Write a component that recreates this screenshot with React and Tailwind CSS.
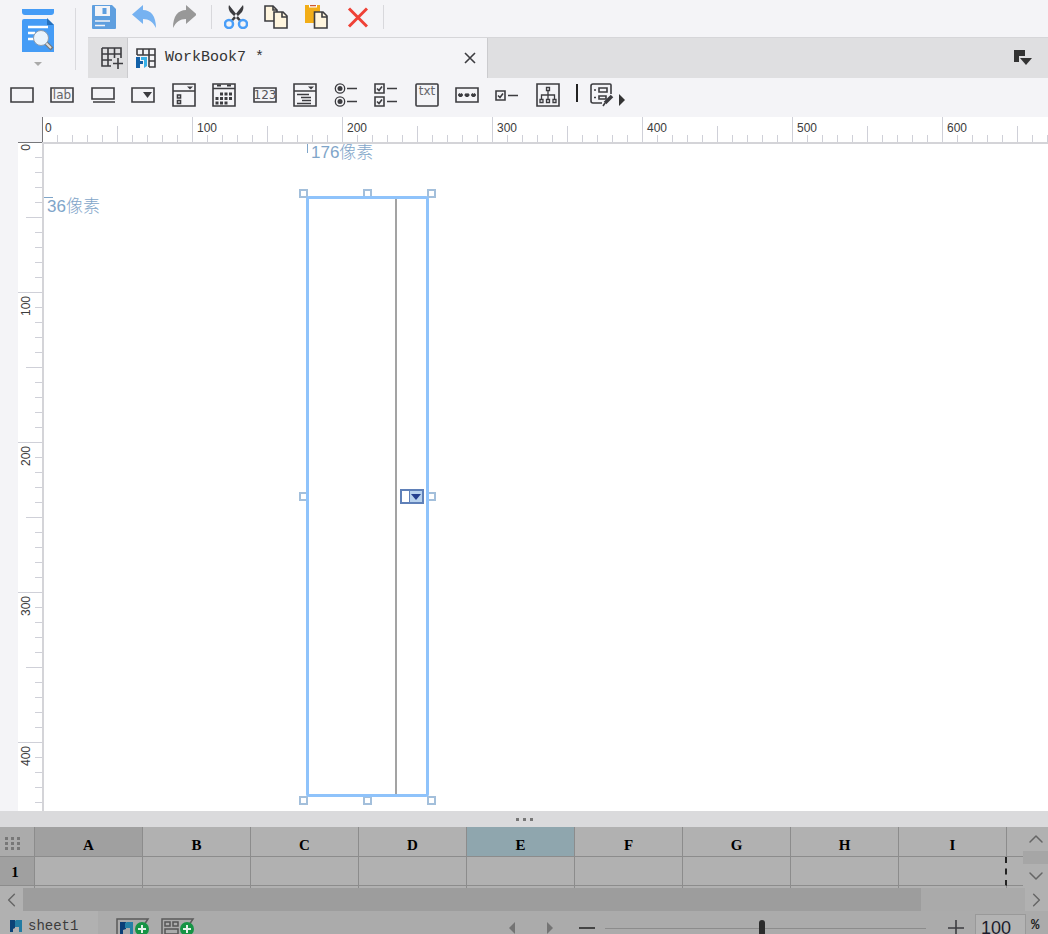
import { ChevronDown, ChevronLeft, ChevronRight, ChevronUp } from "lucide-react";

const INK = "#3c3c40";

function Icon({ children, className = "w-6 h-6", box = "0 0 24 24" }) {
  return (
    <svg viewBox={box} className={`${className} shrink-0`} fill="none" stroke={INK} strokeWidth="1.6" aria-hidden="true">
      {children}
    </svg>
  );
}

function SheetMark({ className }) {
  return (
    <svg viewBox="0 0 12 12" className={`${className} shrink-0`} aria-hidden="true">
      <path d="M0 0h5v8l-2 1v3H0z" fill="#0b4277" />
      <path d="M5 1l1-1h6v12H9V7H5z" fill="#227ba3" />
    </svg>
  );
}

const fileTools = [
  {
    name: "Save",
    icon: (
      <Icon>
        <path d="M1 0h19l4 4v19a1 1 0 0 1-1 1H1a1 1 0 0 1-1-1V1a1 1 0 0 1 1-1z" fill="#5f9fdf" stroke="none" />
        <path d="M3 1h15v10H3z" fill="#f4f4f7" stroke="none" />
        <path d="M10.500 3h4v6h-4z" fill="#5f9fdf" stroke="none" />
        <path d="M3 16h15M3 20.500h10" stroke="#f4f4f7" />
      </Icon>
    ),
  },
  {
    name: "Undo",
    icon: (
      <Icon>
        <path d="M11 0v5c8 0 13 6 13 18-3-6-7-9-13-9v5L0 9.500z" fill="#76b2f1" stroke="none" />
      </Icon>
    ),
  },
  {
    name: "Redo",
    icon: (
      <Icon>
        <path d="M14 0v5C6 5 1 11 1 23c3-6 7-9 13-9v5l11-9.500z" fill="#989898" stroke="none" />
      </Icon>
    ),
  },
];

const editTools = [
  {
    name: "Cut",
    icon: (
      <Icon>
        <path d="M5 0c-1 3 0 5 1 7l9 9 2-1zM19 0c1 3 0 5-1 7l-9 9-2-1z" fill={INK} stroke="none" />
        <circle cx="5" cy="19" r="4" stroke="#4a9ef8" strokeWidth="2.500" fill="#f4f4f7" />
        <circle cx="19" cy="19" r="4" stroke="#4a9ef8" strokeWidth="2.500" fill="#f4f4f7" />
      </Icon>
    ),
  },
  {
    name: "Copy",
    icon: (
      <Icon>
        <path d="M1 1h8l4 4v11H1z" fill="#fff5de" />
        <path d="M9 1v4h4" />
        <path d="M10 7h9l4 4v12H10z" fill="#fff5de" />
        <path d="M18 7v5h5" />
      </Icon>
    ),
  },
  {
    name: "Paste",
    icon: (
      <Icon>
        <path d="M1 0h15v18H1z" fill="#f2ad17" stroke="none" />
        <path d="M5 0h8v2.500H5z" fill="#fff" stroke="none" />
        <path d="M6 .500h6" stroke="#d0582d" />
        <path d="M10.500 7h8.500l4 4v12H10.500z" fill="#fff5de" />
        <path d="M18 7v5h5" />
      </Icon>
    ),
  },
  {
    name: "Delete",
    icon: (
      <Icon>
        <path d="M5 3.500l18 18M23 3.500l-18 18" stroke="#ef4136" strokeWidth="3" />
      </Icon>
    ),
  },
];

const widgets = [
  { name: "Text", icon: <Icon><path d="M1 5h22v14H1z" /></Icon> },
  {
    name: "Label",
    icon: (
      <Icon>
        <path d="M1 5h22v14H1z" />
        <text x="12" y="16" textAnchor="middle" fontSize="12" fontFamily="DejaVu Sans" fill="#66666a" stroke="none">lab</text>
      </Icon>
    ),
  },
  { name: "Button", icon: <Icon><path d="M1 5h22v11H1zM2 19h22" /></Icon> },
  {
    name: "Combo box",
    icon: (
      <Icon>
        <path d="M1 5h22v14H1z" />
        <path d="M12 9h9l-4.500 6z" fill={INK} stroke="none" />
      </Icon>
    ),
  },
  {
    name: "Combo check",
    icon: (
      <Icon>
        <path d="M1 1h22v22H1zM1 8h22M5.500 12h3v3h-3zM5.500 17.500h3v3h-3z" />
        <path d="M15 3.500h6l-3 3z" fill={INK} stroke="none" />
      </Icon>
    ),
  },
  {
    name: "Date",
    icon: (
      <Icon>
        <path d="M1 1h22v22H1zM1 5.500h22" />
        <path d="M5 2.500h4M15 2.500h4" strokeWidth="2" />
        <path d="M8 11h12M3.500 15.500h16.500M3.500 20h12" strokeWidth="3" strokeDasharray="3 1.500" />
      </Icon>
    ),
  },
  {
    name: "Number",
    icon: (
      <Icon>
        <path d="M1 5h22v14H1z" />
        <text x="12" y="16" textAnchor="middle" fontSize="12" fontFamily="DejaVu Sans" fill="#55555a" stroke="none">123</text>
      </Icon>
    ),
  },
  {
    name: "Tree combo",
    icon: (
      <Icon>
        <path d="M1 1h22v22H1zM1 8h22M4 11.500h12M8 14.500h10M9 17.500h9M4 20.500h14" />
        <path d="M15 3.500h6l-3 3z" fill={INK} stroke="none" />
      </Icon>
    ),
  },
  {
    name: "Radio group",
    icon: (
      <Icon>
        <circle cx="6" cy="5.500" r="4.700" strokeWidth="1.300" />
        <circle cx="6" cy="5.500" r="2.500" fill={INK} stroke="none" />
        <circle cx="6" cy="18.500" r="4.700" strokeWidth="1.300" />
        <circle cx="6" cy="18.500" r="2.500" fill={INK} stroke="none" />
        <path d="M13 5.500h10M13 18.500h10" />
      </Icon>
    ),
  },
  {
    name: "Check box group",
    icon: (
      <Icon>
        <path d="M1 1h9v9H1zM1 14h9v9H1zM13 5.500h10M13 18.500h10M3 5.500l2 2 3-4M3 18.500l2 2 3-4" />
      </Icon>
    ),
  },
  {
    name: "Text area",
    icon: (
      <Icon>
        <rect x="1" y="1" width="22" height="22" rx="1" />
        <text x="12" y="12" textAnchor="middle" fontSize="12" fontFamily="DejaVu Sans" fill="#66666a" stroke="none">txt</text>
      </Icon>
    ),
  },
  {
    name: "Password",
    icon: (
      <Icon>
        <path d="M1 5h22v14H1z" />
        <path d="M3 12h5M9.500 12h5M16 12h5M4 10.500l3 3M7 10.500l-3 3M10.500 10.500l3 3M13.500 10.500l-3 3M17 10.500l3 3M20 10.500l-3 3" />
      </Icon>
    ),
  },
  { name: "Check box", icon: <Icon><path d="M1 8h9v9H1zM13 12.500h10M3 12.500l2 2 3-4" /></Icon> },
  {
    name: "Tree",
    icon: (
      <Icon>
        <path d="M1 1h22v22H1z" />
        <path d="M10.500 4.500h3v3h-3zM4 16.500h3v3H4zM10.500 16.500h3v3h-3zM17 16.500h3v3h-3zM12 8v8M5.500 16v-4h13v4" strokeWidth="1.300" />
      </Icon>
    ),
  },
];

const minorTicks = [1, 2, 3, 4, 5, 6, 7, 8, 9];
const rulerLabel = "absolute font-['Liberation_Sans',sans-serif] text-xs leading-4 text-[#3c3c3c]";

function TopRuler() {
  return (
    <div className="flex flex-1 h-[25px] overflow-hidden bg-white">
      {[0, 100, 200, 300, 400, 500, 600].map((n) => (
        <div key={n} className="relative flex items-end w-[150px] shrink-0">
          <span className={`w-[15px] h-full border-l ${n ? "border-[#cfd0d8]" : "border-[#77777b]"}`} />
          {minorTicks.map((t) => (
            <span key={t} className={`w-[15px] border-l border-[#cfd0d8] ${t === 5 ? "h-4" : "h-[7px]"}`} />
          ))}
          <span className={`${rulerLabel} top-[3px] ${n ? "left-[5px]" : "left-[3px]"}`}>{n}</span>
        </div>
      ))}
    </div>
  );
}

function SideRuler() {
  return (
    <div className="w-6 ml-[18px] shrink-0 h-full overflow-hidden bg-white">
      {[0, 100, 200, 300, 400].map((n) => (
        <div key={n} className="relative flex flex-col items-end h-[150px]">
          <span className={`h-[15px] w-full border-t ${n ? "border-[#cfd0d8]" : "border-[#77777b]"}`} />
          {minorTicks.map((t) => (
            <span key={t} className={`h-[15px] border-t border-[#cfd0d8] ${t === 5 ? "w-4" : "w-[7px]"}`} />
          ))}
          <span className={`${rulerLabel} left-0 rotate-180 [writing-mode:vertical-rl] ${n ? "top-1" : "top-[2px]"}`}>{n}</span>
        </div>
      ))}
    </div>
  );
}

const handle = "absolute size-[9px] border-2 border-[#a3bfdb] bg-white";
const offsetLabel =
  "absolute whitespace-nowrap text-[17px] leading-5 font-light text-[#7fa5c9] font-['Liberation_Sans','Noto_Sans_CJK_SC',sans-serif]";

function Canvas() {
  return (
    <main className="relative flex-1 overflow-hidden bg-white border-l-2 border-t-2 border-[#d4d4d8]">
      <span className="absolute left-[263px] top-0 w-px h-[9px] bg-[#7fa5c9]" />
      <span className={`${offsetLabel} left-[267px] -top-px`}>176像素</span>
      <span className="absolute left-0 top-[53px] w-[9px] h-px bg-[#7fa5c9]" />
      <span className={`${offsetLabel} left-[3px] top-[53px]`}>36像素</span>

      <div className="absolute left-[262px] top-[52px] w-[123px] h-[601px]">
        <span className={`${handle} -left-[7px] -top-[7px]`} />
        <span className={`${handle} left-[57px] -top-[7px]`} />
        <span className={`${handle} -right-[7px] -top-[7px]`} />
        <span className={`${handle} -left-[7px] top-[296px]`} />
        <span className={`${handle} -right-[7px] top-[296px]`} />
        <span className={`${handle} -left-[7px] -bottom-[8px]`} />
        <span className={`${handle} left-[57px] -bottom-[8px]`} />
        <span className={`${handle} -right-[7px] -bottom-[8px]`} />
        <div className="absolute inset-0 flex bg-white border-[3px] border-[#8fc3fb] rounded-[3px]">
          <div className="w-[86px] shrink-0" />
          <div className="flex flex-1 items-center justify-center border-l-2 border-[#a3a3a3]">
            <button aria-label="Open list" className="flex w-6 h-[15px] border-2 border-[#5f80b8] bg-white">
              <span className="w-2 shrink-0 h-full border-r border-[#5f80b8]" />
              <span className="flex flex-1 h-full items-center justify-center bg-[#b8d2ee]">
                <svg viewBox="0 0 10 6" className="w-[10px] h-[6px]">
                  <path d="M0 0h10L5 6z" fill="#25408f" />
                </svg>
              </span>
            </button>
          </div>
        </div>
      </div>
    </main>
  );
}

const columns = ["A", "B", "C", "D", "E", "F", "G", "H", "I"];

function Sheet() {
  return (
    <div className="flex h-[61px] overflow-hidden bg-[#b1b1b1]">
      <div className="flex-1 overflow-hidden">
        <table className="w-full table-fixed border-separate border-spacing-0 font-['Liberation_Serif',serif] text-[15px] leading-4 font-bold text-black">
          <colgroup>
            <col className="w-[35px]" />
            {columns.map((c) => (
              <col key={c} className="w-[108px]" />
            ))}
            <col />
          </colgroup>
          <thead>
            <tr className="h-[30px]">
              <th className="p-0 pt-1 border-r border-b border-[#8c8c8c] bg-[#ababab]">
                <svg viewBox="0 0 16 14" className="w-4 h-[14px] ml-[5px]" fill="#777">
                  {[0, 6, 12].map((x) => [0, 5, 10].map((y) => <rect key={`${x}-${y}`} x={x} y={y} width="3" height="3" />))}
                </svg>
              </th>
              {columns.map((c) => (
                <th
                  key={c}
                  className={`p-0 pt-[6px] border-r border-b border-[#8c8c8c] ${c === "A" ? "bg-[#a0a0a0]" : ""} ${c === "E" ? "bg-[#8fa6ae]" : ""}`}
                >
                  {c}
                </th>
              ))}
              <th className="p-0 border-b border-[#8c8c8c]" />
            </tr>
          </thead>
          <tbody>
            <tr className="h-[29px]">
              <th className="p-0 pt-[2px] pr-1 border-r border-b border-[#8c8c8c] bg-[#a0a0a0]">1</th>
              {columns.map((c) => (
                <td key={c} className={`p-0 border-b border-b-[#8c8c8c] ${c === "I" ? "border-r-2 border-dashed border-r-[#222] [border-bottom-style:solid]" : "border-r border-r-[#8c8c8c]"}`} />
              ))}
              <td className="p-0 border-b border-[#8c8c8c]" />
            </tr>
            <tr className="h-2">
              <th className="border-r border-[#8c8c8c]" />
              {columns.map((c) => (
                <td key={c} className="border-r border-[#8c8c8c]" />
              ))}
              <td />
            </tr>
          </tbody>
        </table>
      </div>
      <div className="flex flex-col w-[25px] justify-between bg-[#a6a6a6] text-[#666]">
        <button aria-label="Scroll up" className="flex h-6 items-center justify-center bg-[#b1b1b1]">
          <ChevronUp className="w-6 h-6" strokeWidth={1.5} />
        </button>
        <button aria-label="Scroll down" className="flex h-6 items-center justify-center bg-[#b1b1b1]">
          <ChevronDown className="w-6 h-6" strokeWidth={1.5} />
        </button>
      </div>
    </div>
  );
}

function AddSheetIcon({ form }) {
  return (
    <svg viewBox="0 0 34 18" className="w-[34px] h-[18px]" aria-hidden="true">
      <path d="M1 18V1h31l-4 6" fill="none" stroke="#5b5b5b" strokeWidth="1.500" />
      {form ? (
        <path d="M4 4h5v4H4zM12 4h5v4h-5zM4 11h13v5H4z" fill="none" stroke="#555" strokeWidth="1.500" />
      ) : (
        <g>
          <path d="M4 4h6v7l-3 1v4H4z" fill="#0b3f78" />
          <path d="M9 5l2-1h6v12h-3v-6H9z" fill="#2580a6" />
        </g>
      )}
      <circle cx="26" cy="11" r="7" fill="#169445" />
      <path d="M26 7v8M22 11h8" stroke="#e6f2ea" strokeWidth="2" />
    </svg>
  );
}

function StatusBar() {
  return (
    <footer className="flex h-[23px] items-start overflow-hidden bg-[#ababab]">
      <button className="flex h-[29px] w-[98px] items-center gap-[6px] pl-[10px] bg-[#b1b1b1] font-['Liberation_Mono',monospace] text-sm leading-4 text-[#3c3c3c]">
        <SheetMark className="w-3 h-3" />
        sheet1
      </button>
      <div className="flex h-[29px] ml-[18px] gap-[11px] items-end pb-1">
        <button aria-label="Add report sheet"><AddSheetIcon /></button>
        <button aria-label="Add form sheet"><AddSheetIcon form /></button>
      </div>
      <div className="flex h-[34px] ml-auto items-center">
        <button aria-label="Previous sheet" className="mr-8">
          <svg viewBox="0 0 6 12" className="w-[6px] h-3" fill="#747474"><path d="M6 0v12L0 6z" /></svg>
        </button>
        <button aria-label="Next sheet" className="mr-[26px]">
          <svg viewBox="0 0 6 12" className="w-[6px] h-3" fill="#747474"><path d="M0 0v12l6-6z" /></svg>
        </button>
        <button aria-label="Zoom out" className="flex w-4 h-4 items-center mr-[10px]">
          <span className="w-full h-[2px] bg-[#444]" />
        </button>
        <input
          type="range"
          aria-label="Zoom"
          min="0"
          max="100"
          defaultValue="49"
          className="appearance-none w-[321px] h-4 bg-transparent [&::-webkit-slider-runnable-track]:h-px [&::-webkit-slider-runnable-track]:bg-[#8c8c8c] [&::-webkit-slider-thumb]:appearance-none [&::-webkit-slider-thumb]:w-[6px] [&::-webkit-slider-thumb]:h-4 [&::-webkit-slider-thumb]:-mt-2 [&::-webkit-slider-thumb]:rounded-sm [&::-webkit-slider-thumb]:bg-[#2c2c2c]"
        />
        <button aria-label="Zoom in" className="ml-[22px] mr-[11px]">
          <Icon className="w-4 h-4" box="0 0 16 16"><path d="M0 8h16M8 0v16" /></Icon>
        </button>
        <input
          aria-label="Zoom percent"
          defaultValue="100"
          className="w-[51px] h-7 pl-[5px] mr-[5px] border border-[#999] bg-[#b3b3b3] font-['Liberation_Sans',sans-serif] text-lg text-[#1c1c2c]"
        />
        <span className="w-[17px] pb-[6px] font-['Liberation_Mono',monospace] text-sm leading-4 font-bold text-[#222]">%</span>
      </div>
    </footer>
  );
}

export default function App() {
  return (
    <div className="flex flex-col h-screen overflow-hidden bg-[#f4f4f7]">
      <header className="flex h-[78px] shrink-0">
        <button aria-label="Preview" className="flex flex-col items-center w-[75px] pt-[9px]">
          <svg viewBox="0 0 32 43" className="w-8 h-[43px]" aria-hidden="true">
            <path d="M0 0h32v3a3 3 0 0 1-3 3H3a3 3 0 0 1-3-3z" fill="#459cf6" />
            <path d="M2 10h23l7 6v27H0V12a2 2 0 0 1 2-2z" fill="#459cf6" />
            <path d="M25 9l7 7h-7z" fill="#2470bd" />
            <path d="M6 18h20M6 24h7M6 30h6" stroke="#fff" strokeWidth="2.500" />
            <path d="M24 34l6 6" stroke="#777" strokeWidth="4" />
            <path d="M24 34l5 5" stroke="#ddd" strokeWidth="2" />
            <circle cx="19" cy="29" r="7.500" fill="#eaf3fc" stroke="#8c9cae" />
          </svg>
          <svg viewBox="0 0 8 4" className="w-2 h-1 mt-[10px]"><path d="M0 0h8L4 4z" fill="#aaa" /></svg>
        </button>
        <div className="w-px h-[62px] mt-2 mr-3 bg-[#dadade]" />
        <div className="flex flex-col flex-1 min-w-0">
          <div className="flex h-[37px] shrink-0 items-start pl-1 pt-[5px]">
            <div className="flex gap-4">
              {fileTools.map((t) => (
                <button key={t.name} aria-label={t.name}>{t.icon}</button>
              ))}
            </div>
            <div className="w-px h-6 ml-[15px] mr-3 bg-[#d8d8dc]" />
            <div className="flex gap-4">
              {editTools.map((t) => (
                <button key={t.name} aria-label={t.name}>{t.icon}</button>
              ))}
            </div>
            <div className="w-px h-6 ml-[15px] bg-[#d8d8dc]" />
          </div>
          <nav className="flex flex-1 items-stretch bg-[#dfdfe1] border-t border-[#d6d6d9]">
            <button aria-label="New workbook" className="flex w-10 items-center pl-[13px] border-r border-[#cbcbce]">
              <Icon className="w-[22px] h-[22px]" box="0 0 22 22">
                <path d="M1 1h19v10M1 1v18h9M1 7h19M1 13h10M7 1v18M13.500 1v10M17 11v11M12 16.500h10" />
              </Icon>
            </button>
            <div className="flex w-[360px] items-center pl-2 pr-[11px] bg-[#f4f4f7] border-r border-[#cbcbce]">
              <Icon className="w-5 h-5" box="0 0 20 20">
                <path d="M1 7V1h18v18h-6M1 7h18M7 1v6M13 1v18M13 13h6" />
                <path d="M0 9h4v4h3v3H4v4H0z" fill="#1260a8" stroke="none" />
                <path d="M5 9h6v9l-3 2v-8H5z" fill="#38b0e8" stroke="none" />
              </Icon>
              <a href="#workbook" className="flex-1 pl-[9px] whitespace-pre font-['Liberation_Mono',monospace] text-[15px] text-[#333]">
                WorkBook7 *
              </a>
              <button aria-label="Close tab">
                <Icon className="w-3 h-3" box="0 0 12 12"><path d="M1 1l10 10M11 1L1 11" /></Icon>
              </button>
            </div>
            <button aria-label="Open windows" className="ml-auto mr-4 pb-[2px] flex items-center">
              <svg viewBox="0 0 18 15" className="w-[18px] h-[15px]" fill="#333">
                <path d="M0 0h11v6H5v6H0z" />
                <path d="M6 8h12l-6 7z" />
              </svg>
            </button>
          </nav>
        </div>
      </header>

      <div className="flex h-[34px] mb-[5px] shrink-0 items-center pl-[10px]">
        <div className="flex w-[550px] justify-between">
          {widgets.map((w) => (
            <button key={w.name} aria-label={w.name}>{w.icon}</button>
          ))}
        </div>
        <div className="w-[2px] h-[18px] ml-4 mr-3 mb-1 bg-[#222]" />
        <button aria-label="Edit widget">
          <Icon>
            <path d="M12 20H3a2 2 0 0 1-2-2V3a2 2 0 0 1 2-2h17a1 1 0 0 1 1 1v9M9 5h8v4H9zM9 13h7v3H9zM4 7h2M4 14.500h2" />
            <path d="M22 13l-7 7" strokeWidth="3.500" />
            <path d="M15 20l-2 3" />
          </Icon>
        </button>
        <button aria-label="More widgets" className="ml-[5px] mt-[10px]">
          <svg viewBox="0 0 6 12" className="w-[6px] h-3" fill="#333"><path d="M0 0l6 6-6 6z" /></svg>
        </button>
      </div>

      <div className="flex pl-[42px] shrink-0">
        <TopRuler />
      </div>
      <div className="flex flex-1 min-h-0">
        <SideRuler />
        <Canvas />
      </div>

      <div className="flex h-4 shrink-0 items-center justify-center gap-1 bg-[#dadadc]">
        {[0, 1, 2].map((d) => (
          <span key={d} className="size-[3px] bg-[#777]" />
        ))}
      </div>

      <section className="shrink-0">
        <Sheet />
        <div className="flex h-[23px] bg-[#aaaaaa] text-[#666]">
          <button aria-label="Scroll left" className="flex w-[23px] items-center justify-center bg-[#b1b1b1]">
            <ChevronLeft className="w-6 h-6" strokeWidth={1.5} />
          </button>
          <div className="flex-1 pr-[104px]">
            <div className="h-full bg-[#9d9d9d]" />
          </div>
          <button aria-label="Scroll right" className="flex w-[23px] items-center justify-center bg-[#b1b1b1]">
            <ChevronRight className="w-6 h-6" strokeWidth={1.5} />
          </button>
        </div>
        <StatusBar />
      </section>
    </div>
  );
}
